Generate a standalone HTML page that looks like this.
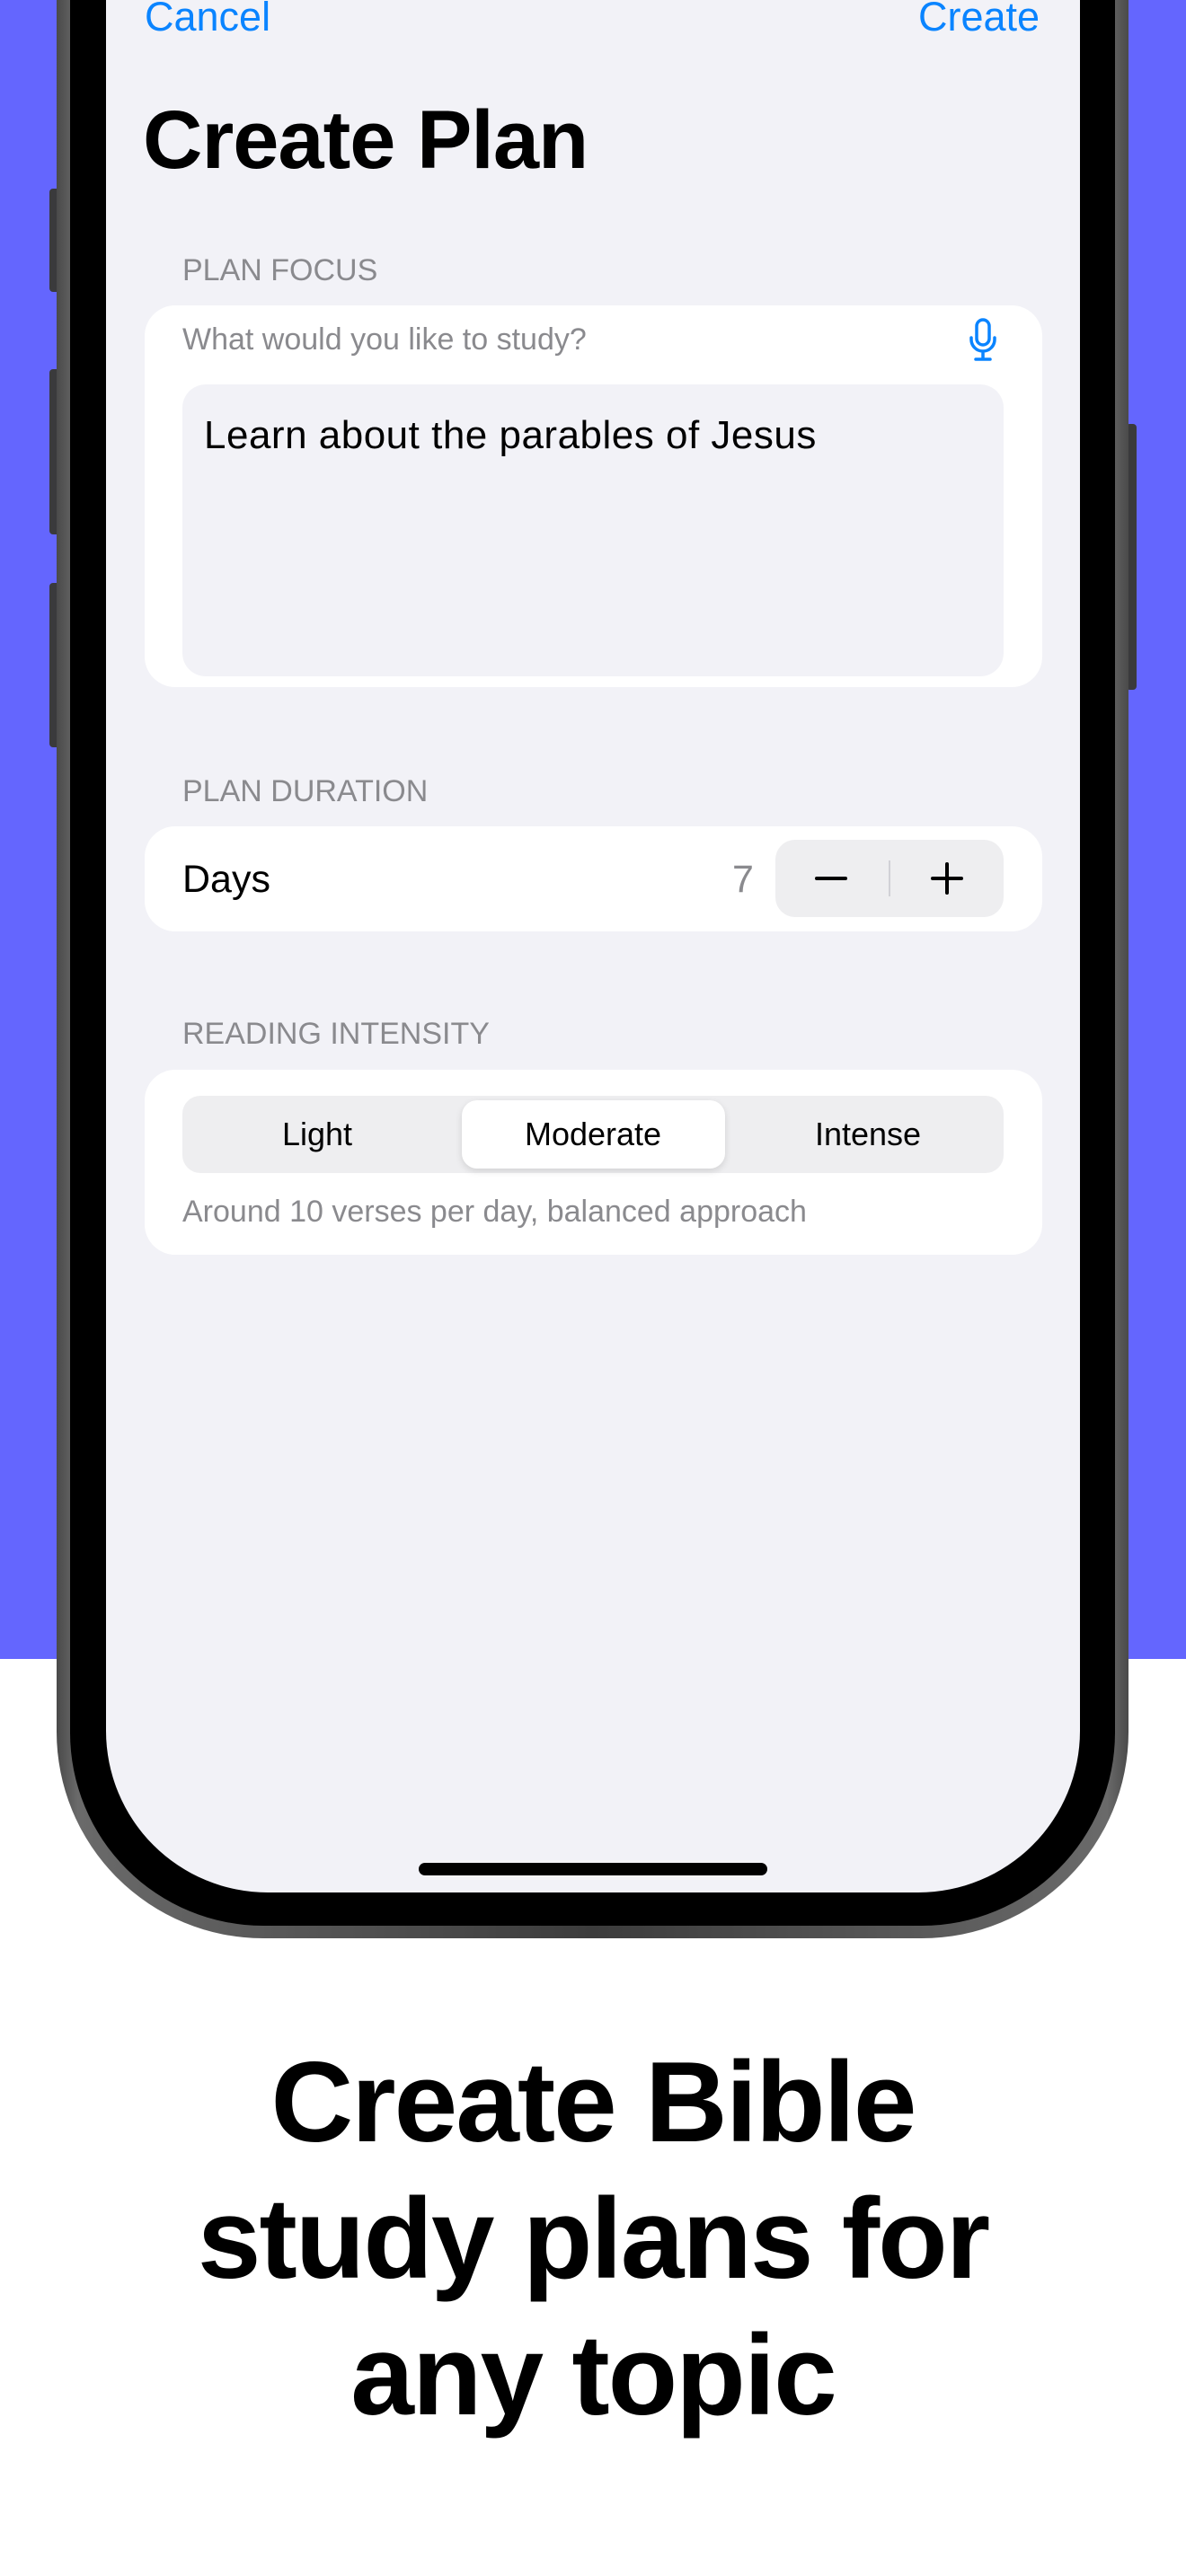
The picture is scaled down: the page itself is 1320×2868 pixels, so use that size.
<!DOCTYPE html>
<html><head><meta charset="utf-8"><style>
*{margin:0;padding:0;box-sizing:border-box}
body{width:1320px;height:2868px;background:#fff;position:relative;overflow:hidden;font-family:"Liberation Sans",sans-serif}
.purple{position:absolute;left:0;top:0;width:1320px;height:1847px;background:#6466fe}
.btn{position:absolute;background:#3a3a3c;border-radius:4px}
.frame{position:absolute;left:63px;top:-260px;width:1193px;height:2418px;border-radius:230px;background:linear-gradient(90deg,#4a4a4a,#6a6a6a 2%,#3c3c3c 50%,#6a6a6a 98%,#4a4a4a)}
.bezel{position:absolute;left:78px;top:-250px;width:1163px;height:2394px;border-radius:215px;background:#000}
.screen{position:absolute;left:118px;top:-240px;width:1084px;height:2347px;border-radius:180px;background:#f2f2f7;overflow:hidden}
.a{position:absolute;white-space:nowrap}
.blue{color:#0a84ff;font-size:45px}
.lbl{color:#8a8a8e;font-size:34px}
.card{position:absolute;left:161px;width:999px;background:#fff;border-radius:34px}
</style></head><body>
<div class="purple"></div>
<div class="btn" style="left:55px;top:210px;width:12px;height:115px"></div>
<div class="btn" style="left:55px;top:411px;width:12px;height:184px"></div>
<div class="btn" style="left:55px;top:649px;width:12px;height:183px"></div>
<div class="btn" style="left:1253px;top:472px;width:12px;height:296px"></div>
<div class="frame"></div>
<div class="bezel"></div>
<div class="screen"></div>

<div class="a blue" style="left:161px;top:-7px">Cancel</div>
<div class="a blue" style="left:1022px;top:-7px">Create</div>
<div class="a" style="left:159px;top:104px;font-size:92px;font-weight:bold;letter-spacing:-1px">Create Plan</div>

<div class="a lbl" style="left:203px;top:282px">PLAN FOCUS</div>
<div class="card" style="top:340px;height:425px"></div>
<div class="a lbl" style="left:203px;top:359px">What would you like to study?</div>
<svg class="a" style="left:1078px;top:354px" width="32" height="50" viewBox="0 0 32 50"><rect x="9" y="2" width="14" height="28" rx="7" fill="none" stroke="#0a84ff" stroke-width="3.5"/><path d="M3 22v2a13 13 0 0 0 26 0v-2M16 37v8M8 46h16" fill="none" stroke="#0a84ff" stroke-width="3.5" stroke-linecap="round"/></svg>
<div class="a" style="left:203px;top:428px;width:914px;height:325px;background:#f2f2f7;border-radius:26px"></div>
<div class="a" style="left:227px;top:460px;font-size:44px;letter-spacing:0.5px;color:#000">Learn about the parables of Jesus</div>

<div class="a lbl" style="left:203px;top:862px">PLAN DURATION</div>
<div class="card" style="top:920px;height:117px"></div>
<div class="a" style="left:203px;top:955px;font-size:43px">Days</div>
<div class="a" style="left:815px;top:955px;font-size:43px;color:#8a8a8e">7</div>
<div class="a" style="left:863px;top:935px;width:254px;height:86px;background:#eeeef0;border-radius:22px"></div>
<div class="a" style="left:989px;top:958px;width:2px;height:40px;background:#d1d1d6"></div>
<div class="a" style="left:907px;top:976px;width:36px;height:4px;background:#000;border-radius:2px"></div>
<div class="a" style="left:1036px;top:976px;width:36px;height:4px;background:#000;border-radius:2px"></div>
<div class="a" style="left:1052px;top:960px;width:4px;height:36px;background:#000;border-radius:2px"></div>

<div class="a lbl" style="left:203px;top:1132px">READING INTENSITY</div>
<div class="card" style="top:1191px;height:206px"></div>
<div class="a" style="left:203px;top:1220px;width:914px;height:86px;background:#eeeef0;border-radius:20px"></div>
<div class="a" style="left:514px;top:1225px;width:293px;height:76px;background:#fff;border-radius:17px;box-shadow:0 3px 8px rgba(0,0,0,.12)"></div>
<div class="a" style="left:253px;top:1242px;width:200px;text-align:center;font-size:36px">Light</div>
<div class="a" style="left:560px;top:1242px;width:200px;text-align:center;font-size:36px">Moderate</div>
<div class="a" style="left:866px;top:1242px;width:200px;text-align:center;font-size:36px">Intense</div>
<div class="a lbl" style="left:203px;top:1330px">Around 10 verses per day, balanced approach</div>

<div class="a" style="left:466px;top:2074px;width:388px;height:14px;background:#000;border-radius:7px"></div>

<div class="a" style="left:0;top:2264px;width:1320px;text-align:center;font-size:127px;font-weight:bold;line-height:152px;letter-spacing:-2px;white-space:normal">Create Bible<br>study plans for<br>any topic</div>
</body></html>
